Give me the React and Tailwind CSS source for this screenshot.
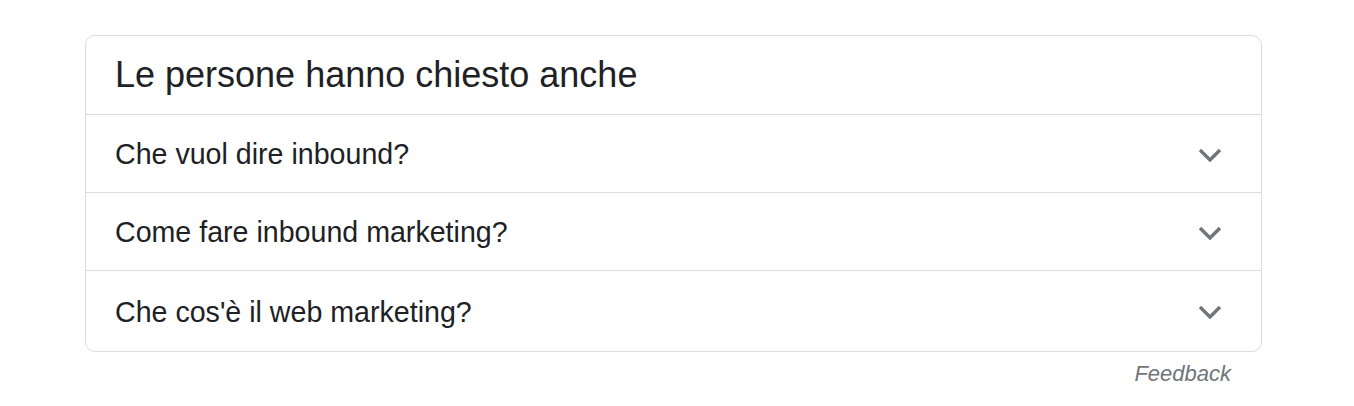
export default function App() {
  const rows = ["Che vuol dire inbound?", "Come fare inbound marketing?", "Che cos'è il web marketing?"];
  return (
    <div className="w-[1354px] h-[406px] bg-white pt-[35px] pl-[85px]" style={{ fontFamily: "Arial, 'Liberation Sans', sans-serif" }}>
      <div className="w-[1177px]">
        <div className="border border-[#dadce0] rounded-[10px] text-[#202124]">
          <div className="h-[79px] flex items-center pl-[29px] text-[36px] border-b border-[#dadce0]">Le persone hanno chiesto anche</div>
          {rows.map((r, i) => (
            <div key={i} className={"flex items-center justify-between pl-[29px] pr-[39px] pt-[2px] text-[28.6px] " + (i < 2 ? "h-[78px] border-b border-[#dadce0]" : "h-[80px]")}>
              <span>{r}</span>
              <svg width="24" height="14" viewBox="0 0 24 14" fill="none" stroke="#70757a" strokeWidth="3.4"><polyline points="2,2 12,12 22,2" /></svg>
            </div>
          ))}
        </div>
        <div className="flex justify-end pr-[31px] pt-[5px] text-[22px] italic text-[#70757a]">Feedback</div>
      </div>
    </div>
  );
}
